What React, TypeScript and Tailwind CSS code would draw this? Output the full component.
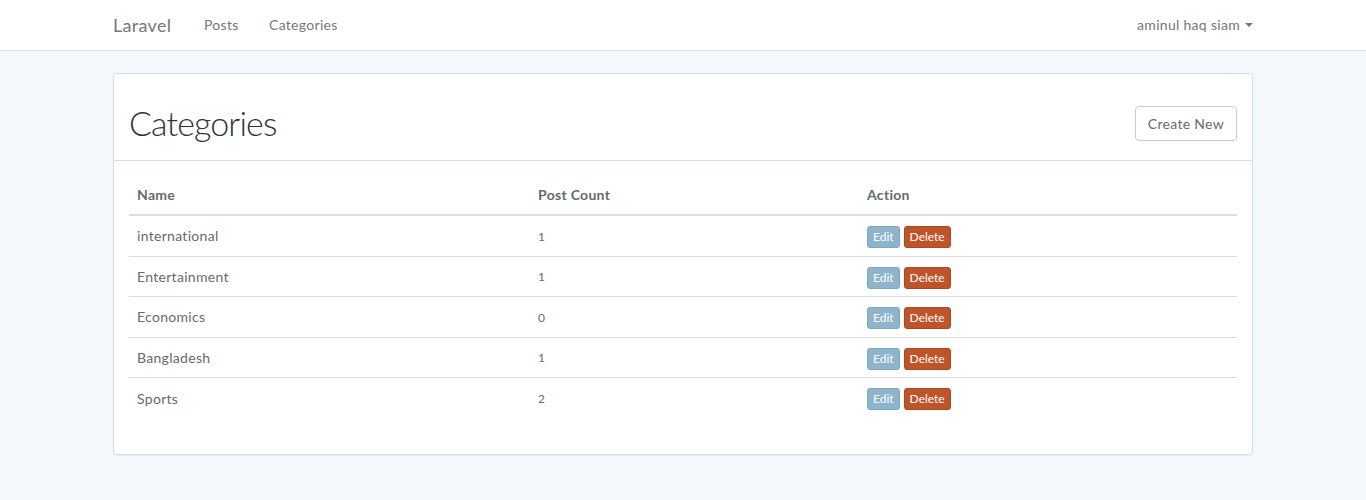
import React from "react";

const rows = [
  { name: "international", count: 1 },
  { name: "Entertainment", count: 1 },
  { name: "Economics", count: 0 },
  { name: "Bangladesh", count: 1 },
  { name: "Sports", count: 2 },
];

export default function App() {
  return (
    <div
      className="min-h-[500px] bg-[#f5f8fa] text-[#636b6f] text-[14px] tracking-[0.3px]"
      style={{ fontFamily: "Lato, 'Open Sans', sans-serif" }}
    >
      <nav className="bg-white border-b border-[#d3e0e9] h-[51px]">
        <div className="w-[1170px] mx-auto px-[15px] flex items-center h-[50px]">
          <span className="w-[91px] text-[18px] leading-[20px] text-[#777]">Laravel</span>
          <span className="w-[65px] leading-[20px] text-[#777]">Posts</span>
          <span className="leading-[20px] text-[#777]">Categories</span>
          <span className="ml-auto leading-[20px] text-[#777] flex items-center">
            aminul haq siam
            <span className="ml-[5px] inline-block w-0 h-0 border-l-[4px] border-r-[4px] border-t-[4px] border-l-transparent border-r-transparent border-t-[#777]" />
          </span>
        </div>
      </nav>

      <div className="w-[1170px] mx-auto px-[15px] pt-[22px]">
        <div className="bg-white border border-[#d3e0e9] rounded-[4px] shadow-[0_1px_1px_rgba(0,0,0,0.05)]">
          <div className="h-[87px] px-[15px] flex items-start justify-between border-b border-[#d3e0e9]">
            <h1 className="mt-[29px] text-[34px] leading-[40px] text-[#333] font-light tracking-[-0.9px]">Categories</h1>
            <button className="mt-[32px] h-[35px] px-[12px] border border-[#ccc] rounded-[4px] bg-white text-[#636b6f] text-[14px] leading-[22px]">
              Create New
            </button>
          </div>
          <div className="px-[15px] pt-[15px] pb-[36px]">
            <table className="w-full border-collapse">
              <thead>
                <tr className="border-b-2 border-[#ddd]">
                  <th className="w-[401px] text-left font-bold px-[8px] py-[8px] leading-[22.4px]">Name</th>
                  <th className="w-[329px] text-left font-bold px-[8px] py-[8px] leading-[22.4px]">Post Count</th>
                  <th className="text-left font-bold px-[8px] py-[8px] leading-[22.4px]">Action</th>
                </tr>
              </thead>
              <tbody>
                {rows.map((r, i) => (
                  <tr key={r.name} className={i > 0 ? "border-t border-[#ddd] h-[40.5px]" : "h-[41px]"}>
                    <td className="px-[8px] align-middle leading-[22.4px] pt-[1px]">{r.name}</td>
                    <td className="px-[8px] align-middle leading-[22.4px] pt-[2px] text-[12px] text-[#636b6f]">{r.count}</td>
                    <td className="px-[8px] align-middle">
                      <div className="flex gap-[4px] pt-[2px] tracking-normal">
                        <span className="h-[22px] px-[5px] flex items-center bg-[#8eb4cb] border border-[#7da8c3] rounded-[3px] text-white text-[12px]">
                          Edit
                        </span>
                        <span className="h-[22px] px-[5px] flex items-center bg-[#bf5329] border border-[#aa4a24] rounded-[3px] text-white text-[12px]">
                          Delete
                        </span>
                      </div>
                    </td>
                  </tr>
                ))}
              </tbody>
            </table>
          </div>
        </div>
      </div>
    </div>
  );
}
